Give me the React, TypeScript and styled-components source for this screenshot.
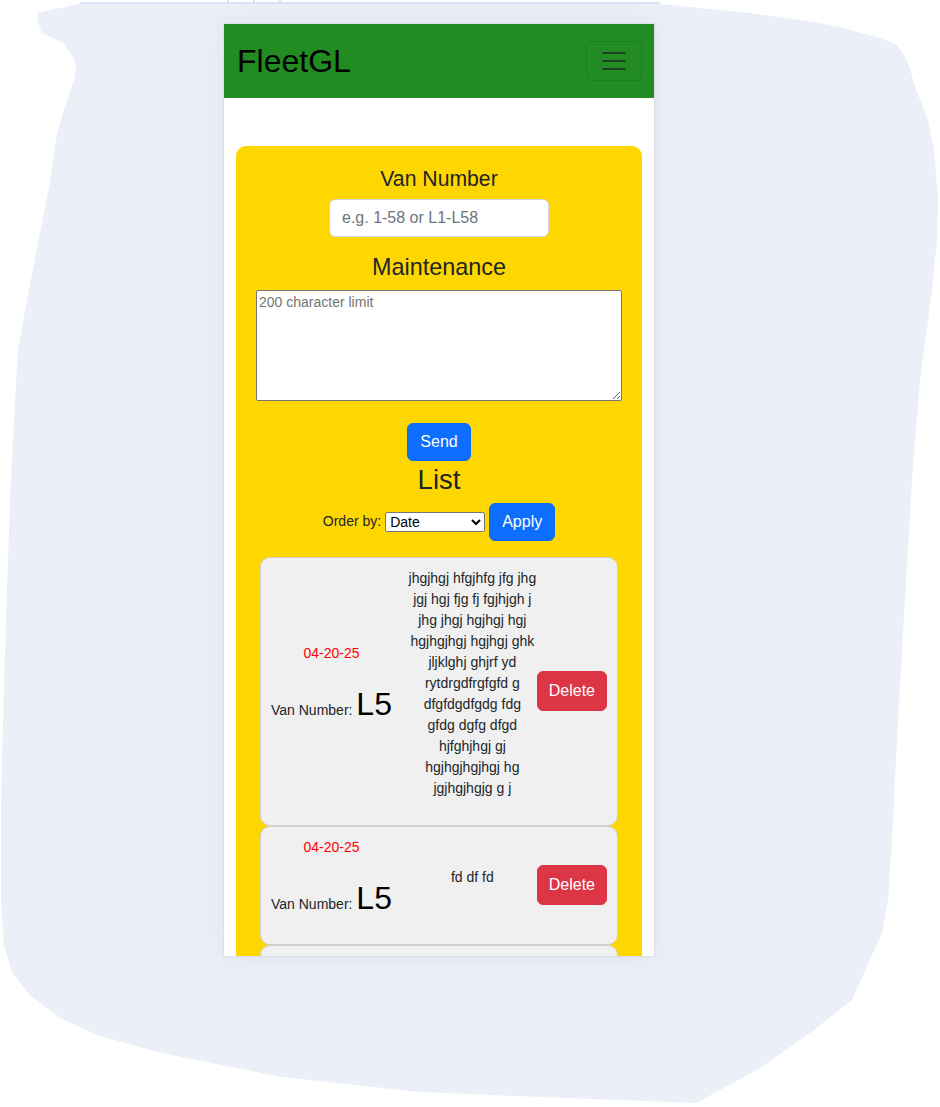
import React from "react";
import styled, { createGlobalStyle } from "styled-components";

const GlobalStyle = createGlobalStyle`
  html, body { margin: 0; padding: 0; background: #ffffff; }
  body { font-family: "Liberation Sans", Arial, sans-serif; color: #212529; }
  * { box-sizing: border-box; }
`;

const Page = styled.div`
  position: relative;
  width: 940px;
  height: 1107px;
  overflow: hidden;
`;

const Backdrop = styled.svg`
  position: absolute;
  left: 0;
  top: 0;
  width: 940px;
  height: 1107px;
  z-index: 0;
`;

const Stage = styled.div`
  position: relative;
  z-index: 1;
  padding: 24px 0 0 224px;
`;

const Phone = styled.div`
  width: 430px;
  height: 932px;
  background: #ffffff;
  overflow: hidden;
  box-shadow: 0 0 0 1px #dcdfe6, 0 0 22px rgba(40, 60, 110, 0.08);
`;

const Navbar = styled.nav`
  height: 74px;
  background: #228b22;
  padding: 8px 12px 8px 13px;
  display: flex;
  align-items: center;
  justify-content: space-between;
`;

const Brand = styled.div`
  font-size: 32px;
  line-height: 48px;
  padding: 5px 0;
  color: #000000;
`;

const Toggler = styled.button`
  width: 56px;
  height: 40px;
  padding: 4px 12px;
  border: 1px solid rgba(0, 0, 0, 0.1);
  border-radius: 6px;
  background: transparent;
  display: flex;
  align-items: center;
  justify-content: center;
`;

const Main = styled.main`
  padding: 48px 12px 0 12px;
`;

const Card = styled.section`
  background: #ffd700;
  border-radius: 10px;
  padding: 20px 20px 40px 20px;
  display: flex;
  flex-direction: column;
  align-items: center;
  text-align: center;
`;

const Heading = styled.h2<{ $size: number; $mb?: number; $mt?: number }>`
  margin: ${(p) => p.$mt ?? 0}px 0 ${(p) => p.$mb ?? 8}px 0;
  font-weight: 400;
  font-size: ${(p) => p.$size}px;
  line-height: 1.2;
  color: #212529;
`;

const TextInput = styled.input`
  width: 220px;
  height: 38px;
  padding: 6px 12px;
  font-family: "Liberation Sans", Arial, sans-serif;
  font-size: 16px;
  line-height: 24px;
  color: #212529;
  background: #ffffff;
  border: 1px solid #ced4da;
  border-radius: 6px;
  margin-bottom: 16px;
  &::placeholder { color: #6c757d; }
`;

const TextArea = styled.textarea`
  width: 100%;
  height: 111px;
  padding: 2px;
  font-family: "Liberation Sans", Arial, sans-serif;
  font-size: 14px;
  line-height: 18px;
  border: 1px solid #767676;
  border-radius: 2px;
  background: #ffffff;
  margin: 0;
  &::placeholder { color: #757575; }
`;

const Button = styled.button<{ $variant: "primary" | "danger"; $tall?: boolean }>`
  font-family: "Liberation Sans", Arial, sans-serif;
  font-size: 16px;
  line-height: 24px;
  padding: ${(p) => (p.$tall ? "7px 11px" : "6px 12px")};
  border-radius: 6px;
  color: #ffffff;
  border: 1px solid ${(p) => (p.$variant === "primary" ? "#0d6efd" : "#dc3545")};
  background: ${(p) => (p.$variant === "primary" ? "#0d6efd" : "#dc3545")};
  flex: none;
`;

const SendButton = styled(Button)`
  margin-top: 22px;
`;

const OrderRow = styled.div`
  display: flex;
  align-items: center;
  gap: 4px;
  margin-bottom: 16px;
`;

const OrderLabel = styled.label`
  font-size: 14px;
  line-height: 21px;
  color: #212529;
`;

const Select = styled.select`
  width: 100px;
  height: 20px;
  font-family: "Liberation Sans", Arial, sans-serif;
  font-size: 14px;
  color: #000;
  background: #ffffff;
  border: 1px solid #767676;
  border-radius: 2px;
`;

const ItemList = styled.div`
  align-self: stretch;
  margin: 0 4px;
  display: flex;
  flex-direction: column;
`;

const Item = styled.article`
  display: flex;
  align-items: center;
  padding: 10px;
  background: #f0f0f0;
  border: 1px solid #cfcfcf;
  border-radius: 10px;
  text-align: center;
`;

const LeftCol = styled.div`
  flex: none;
`;

const DateText = styled.p`
  margin: 0 0 16px 0;
  font-size: 14px;
  line-height: 21px;
  color: #ff0000;
`;

const VanLine = styled.p`
  margin: 0 0 12px 0;
  font-size: 14px;
  line-height: 21px;
  color: #212529;
`;

const VanCode = styled.span`
  font-size: 32px;
  line-height: 48px;
  color: #000000;
`;

const MiddleCol = styled.div`
  flex: 1;
  display: flex;
  justify-content: center;
  padding-left: 16px;
  min-width: 0;
`;

const Note = styled.p`
  flex: none;
  width: 128px;
  margin: 0 0 16px 0;
  font-size: 14px;
  line-height: 21px;
  color: #212529;
`;

type Entry = { date: string; van: string; note: string };

const entries: Entry[] = [
  {
    date: "04-20-25",
    van: "L5",
    note:
      "jhgjhgj hfgjhfg jfg jhg jgj hgj fjg fj fgjhjgh j jhg jhgj hgjhgj hgj hgjhgjhgj hgjhgj ghk jljklghj ghjrf yd rytdrgdfrgfgfd g dfgfdgdfgdg fdg gfdg dgfg dfgd hjfghjhgj gj hgjhgjhgjhgj hg jgjhgjhgjg g j",
  },
  { date: "04-20-25", van: "L5", note: "fd df fd" },
  { date: "04-20-25", van: "L5", note: "fd df fd" },
];

const blobPath =
  "M37 13 L78 4 L660 4 L700 8 L750 13 L800 20 L840 27 L880 38 L897 45 L907 60 L917 92 L928 120 L934 150 L938 200 L937 240 L932 290 L920 380 L912 480 L905 600 L898 720 L892 840 L888 900 L882 933 L852 1000 L810 1033 L762 1067 L720 1090 L696 1103 L540 1097 L420 1092 L282 1077 L162 1053 L100 1036 L60 1018 L30 995 L12 972 L4 945 L1 900 L1 800 L5 650 L10 500 L15 400 L18 350 L27 300 L40 233 L50 183 L57 133 L67 100 L75 77 L76 67 L73 57 L63 43 L42 33 L38 23 Z";

export default function App() {
  return (
    <>
      <GlobalStyle />
      <Page>
        <Backdrop viewBox="0 0 940 1107" aria-hidden="true">
          <path d={blobPath} fill="#ebeff8" />
          <rect x="80" y="2" width="580" height="2" fill="#d9e2f4" />
          <rect x="227" y="0" width="2" height="3" fill="#d9e2f4" />
          <rect x="253" y="0" width="2" height="3" fill="#d9e2f4" />
          <rect x="279" y="0" width="2" height="3" fill="#d9e2f4" />
        </Backdrop>
        <Stage>
          <Phone>
            <Navbar>
              <Brand>FleetGL</Brand>
              <Toggler aria-label="Toggle navigation">
                <svg width="30" height="30" viewBox="0 0 30 30">
                  <path
                    d="M4 7h22M4 15h22M4 23h22"
                    stroke="rgba(33,37,41,0.75)"
                    strokeWidth="2"
                    strokeLinecap="round"
                  />
                </svg>
              </Toggler>
            </Navbar>
            <Main>
              <Card>
                <Heading $size={21.2}>Van Number</Heading>
                <TextInput placeholder="e.g. 1-58 or L1-L58" />
                <Heading $size={23.4}>Maintenance</Heading>
                <TextArea placeholder="200 character limit" />
                <SendButton $variant="primary">Send</SendButton>
                <Heading $size={27.5} $mt={2} $mb={7}>
                  List
                </Heading>
                <OrderRow>
                  <OrderLabel>Order by:</OrderLabel>
                  <Select defaultValue="date">
                    <option value="date">Date</option>
                    <option value="van">Van Number</option>
                  </Select>
                  <Button $variant="primary">Apply</Button>
                </OrderRow>
                <ItemList>
                  {entries.map((e, i) => (
                    <Item key={i}>
                      <LeftCol>
                        <DateText>{e.date}</DateText>
                        <VanLine>
                          Van Number: <VanCode>{e.van}</VanCode>
                        </VanLine>
                      </LeftCol>
                      <MiddleCol>
                        <Note>{e.note}</Note>
                      </MiddleCol>
                      <Button $variant="danger" $tall>
                        Delete
                      </Button>
                    </Item>
                  ))}
                </ItemList>
              </Card>
            </Main>
          </Phone>
        </Stage>
      </Page>
    </>
  );
}
